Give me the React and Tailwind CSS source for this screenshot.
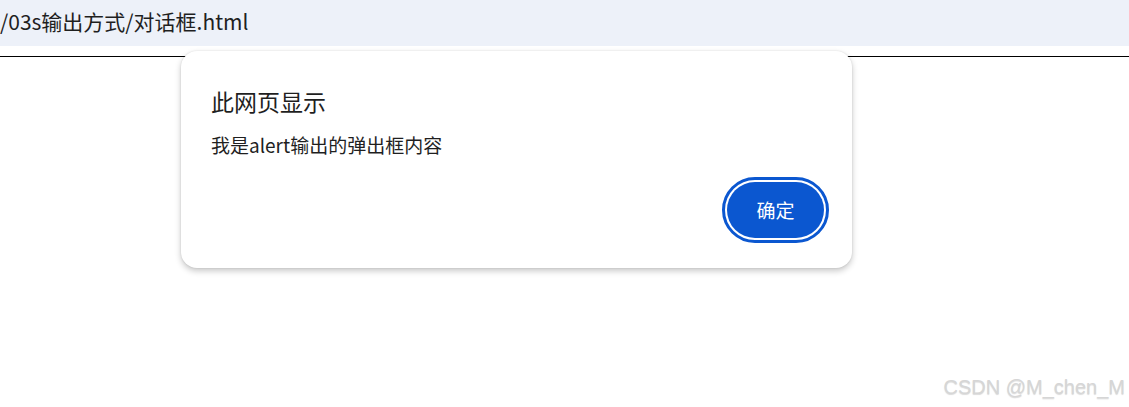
export default function App() {
  return (
    <div
      className="relative w-[1129px] h-[407px] bg-white overflow-hidden"
      style={{ fontFamily: '"Microsoft YaHei", "Noto Sans CJK SC", "Noto Sans", sans-serif' }}
    >
      {/* address bar */}
      <div className="h-[46px] bg-[#edf1f9] flex items-center">
        <span className="text-[21px] text-[#1f1f1f] leading-none pb-[3px] whitespace-nowrap">/03s输出方式/对话框.html</span>
      </div>
      <div className="mt-[10px] h-px bg-black" />

      {/* alert dialog */}
      <div className="absolute left-[181px] top-[51px] w-[671px] h-[217px] bg-white rounded-[16px] shadow-[0_3px_6px_rgba(0,0,0,0.22),0_0_2px_rgba(0,0,0,0.12)] pl-[30px] pr-[23px] pt-[36px]">
        <h2 className="text-[23px] leading-[28px] text-[#1f1f1f]">此网页显示</h2>
        <p className="mt-[18px] text-[19px] leading-[24px] text-[#1f1f1f] whitespace-nowrap">我是alert输出的弹出框内容</p>
        <div className="flex justify-end mt-[20px]">
          <button className="w-[107px] h-[66px] rounded-full border-[3px] border-[#0b57d0] p-[2px] bg-white">
            <span className="flex w-full h-full rounded-full bg-[#0b57d0] items-center justify-center text-white text-[19px]">
              确定
            </span>
          </button>
        </div>
      </div>

      {/* watermark */}
      <div
        className="absolute right-[4px] top-[372px] text-[20px] text-[#d6d6d6] [text-shadow:0_1px_1px_rgba(0,0,0,0.15)]"
        style={{ fontFamily: '"Liberation Sans", Arial, sans-serif' }}
      >
        CSDN @M_chen_M
      </div>
    </div>
  );
}
